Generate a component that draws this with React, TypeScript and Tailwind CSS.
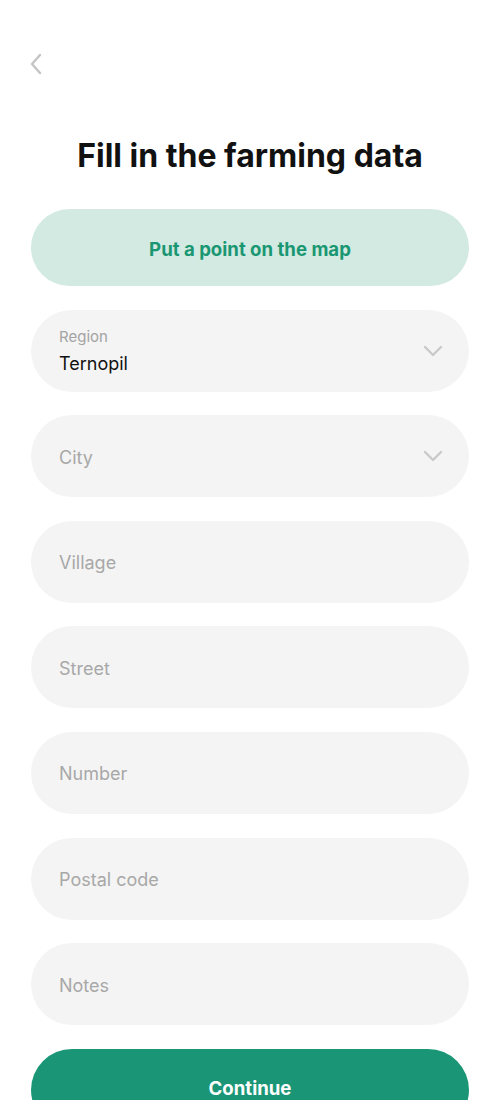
import React from "react";

const Chevron = () => (
  <svg width="20" height="12" viewBox="0 0 20 12" fill="none">
    <path d="M2 2l8 8 8-8" stroke="#c9c9c9" strokeWidth="2.4" strokeLinecap="round" strokeLinejoin="round" />
  </svg>
);

const Field = ({ label, value, select }: { label: string; value?: string; select?: boolean }) => (
  <div className="h-[82px] rounded-full bg-[#f4f4f4] flex items-center pl-[28px] pr-[26px]">
    {value ? (
      <div className="flex-1 self-start pt-[18px] flex flex-col">
        <span className="text-[15px] leading-[18px] text-[#a3a3a3]">{label}</span>
        <span className="text-[18px] leading-[24px] text-[#111] mt-[6px]">{value}</span>
      </div>
    ) : (
      <div className="flex-1 flex flex-col">
        <span className="text-[18px] leading-[24px] text-[#a8a8a8] mt-[3px]">{label}</span>
      </div>
    )}
    {select && <Chevron />}
  </div>
);

export default function App() {
  return (
    <div className="w-[500px] h-[1100px] bg-white overflow-hidden" style={{ fontFamily: "Inter, 'Noto Sans', sans-serif" }}>
      <div className="pt-[53px] pl-[29px]">
        <svg width="14" height="22" viewBox="0 0 14 22" fill="none">
          <path d="M11 2L3 11l8 9" stroke="#c4c4c4" strokeWidth="2.4" strokeLinecap="round" strokeLinejoin="round" />
        </svg>
      </div>
      <h1 className="mt-[61px] text-center text-[32px] leading-[40px] font-bold text-[#111]">Fill in the farming data</h1>
      <div className="px-[31px] mt-[33px] flex flex-col gap-[23.6px]">
        <div className="h-[77px] rounded-full bg-[#d2eae2] flex items-center justify-center text-[18.6px] font-bold text-[#1a9772]">
          <span className="mt-[4px]">Put a point on the map</span>
        </div>
        <Field label="Region" value="Ternopil" select />
        <Field label="City" select />
        <Field label="Village" />
        <Field label="Street" />
        <Field label="Number" />
        <Field label="Postal code" />
        <Field label="Notes" />
        <div className="h-[82px] rounded-full bg-[#1a9677] flex items-center justify-center text-[18.6px] font-bold text-white">
          <span className="-mt-[2px]">Continue</span>
        </div>
      </div>
    </div>
  );
}
